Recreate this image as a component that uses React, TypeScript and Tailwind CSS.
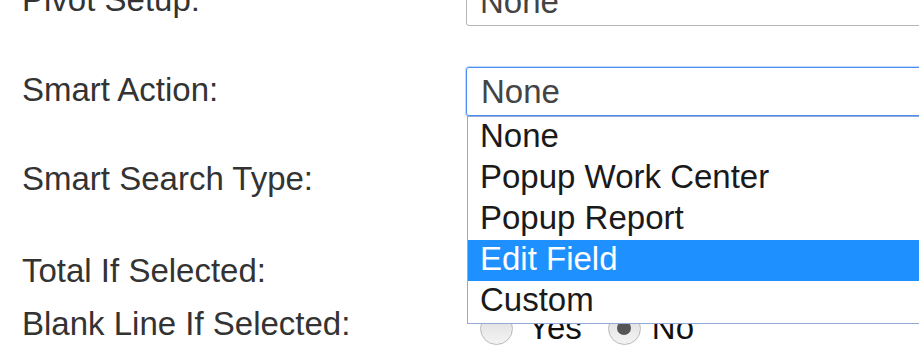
import React from 'react';

const options = ['None', 'Popup Work Center', 'Popup Report', 'Edit Field', 'Custom'];

function Radio({ checked }: { checked?: boolean }) {
  return (
    <span className="flex h-[33px] w-[33px] items-center justify-center rounded-full border border-[#b9b9b9] bg-gradient-to-b from-[#dcdcdc] to-[#f4f4f4]">
      {checked && <span className="h-[14px] w-[14px] rounded-full bg-[#555555]" />}
    </span>
  );
}

function Row({ label, height, children }: { label: string; height: string; children?: React.ReactNode }) {
  return (
    <div className={`flex ${height}`}>
      <div className="w-[466px] shrink-0 pl-[22px] pt-[4px] text-[#333333]">{label}</div>
      <div className="flex-1">{children}</div>
    </div>
  );
}

export default function App() {
  return (
    <div
      className="relative h-[348px] w-[919px] overflow-hidden bg-white text-[33px] leading-[38px]"
      style={{ fontFamily: '"Liberation Sans", Arial, sans-serif' }}
    >
      <div className="mt-[-23px] flex flex-col">
        <Row label="Pivot Setup:" height="h-[90px]">
          <div className="flex h-[49px] w-[520px] items-center rounded-[3px] border border-[#b5b5b5] pl-[13px] text-[#444444]">
            None
          </div>
        </Row>
        <Row label="Smart Action:" height="h-[89px]">
          <div className="flex h-[49px] w-[520px] items-center rounded-[3px] border border-[#4a8ef0] pl-[14px] text-[#444444] shadow-[0_0_0_1px_rgba(77,144,254,0.35)]">
            None
          </div>
        </Row>
        {/* rows 3 and 4: their inputs sit under the open list */}
        <Row label="Smart Search Type:" height="h-[92px]" />
        <Row label="Total If Selected:" height="h-[53px]" />
        <Row label="Blank Line If Selected:" height="h-[60px]">
          <div className="flex items-center pt-[8px] pl-[14px] text-[#111111]">
            <Radio />
            <span className="ml-[15px] mr-[26px]">Yes</span>
            <Radio checked />
            <span className="ml-[11px]">No</span>
          </div>
        </Row>
      </div>

      <ul className="absolute left-[467px] top-[116px] w-[500px] border border-[#93aad6] bg-white pb-[1px] text-[#1a1a1a]">
        {options.map((o) => (
          <li
            key={o}
            className={`h-[41px] pl-[12px] leading-[38px] ${o === 'Edit Field' ? 'bg-[#1e90ff] text-white' : ''}`}
          >
            {o}
          </li>
        ))}
      </ul>
    </div>
  );
}
